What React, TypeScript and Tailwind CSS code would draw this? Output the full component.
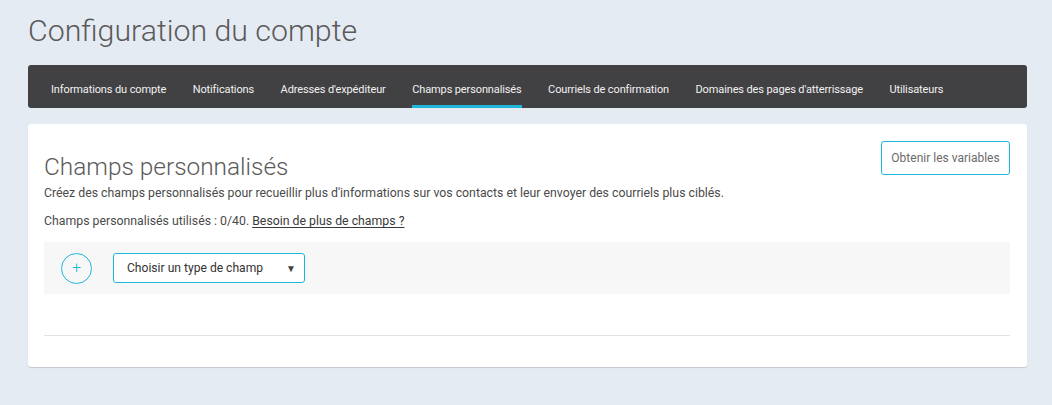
import React from "react";

const TABS = [
  "Informations du compte",
  "Notifications",
  "Adresses d'expéditeur",
  "Champs personnalisés",
  "Courriels de confirmation",
  "Domaines des pages d'atterrissage",
  "Utilisateurs",
];

const ACTIVE = "Champs personnalisés";

export default function App() {
  return (
    <div
      className="min-h-[405px] bg-[#e5ebf2] pl-[28px] pr-[25px] pt-[12px] pb-[39px]"
      style={{ fontFamily: "Roboto, 'Liberation Sans', sans-serif" }}
    >
      <h1 className="text-[30.3px] font-light leading-[38px] text-[#5a5a5a]">
        Configuration du compte
      </h1>

      {/* Tabs bar */}
      <nav className="mt-[15px] flex h-[43px] items-stretch rounded-[3px] bg-[#414042] pl-[23px]">
        {TABS.map((tab) => (
          <div
            key={tab}
            className={`mr-[26.5px] flex shrink-0 items-center whitespace-nowrap border-b-[3px] pt-[11px] text-[11px] tracking-[-0.12px] text-[#f2f2f2] ${
              tab === ACTIVE ? "border-[#1fb6dc]" : "border-transparent"
            }`}
          >
            {tab}
          </div>
        ))}
      </nav>

      {/* Card */}
      <div className="mt-[16px] rounded-[3px] bg-white pl-[16px] pr-[17px] pb-[31px] pt-[17px] shadow-[0_1px_1px_rgba(0,0,0,0.15)]">
        <div className="flex items-start justify-between">
          <div className="pt-[11px]">
            <h2 className="text-[24.4px] font-light leading-[30px] text-[#5a5a5a]">
              Champs personnalisés
            </h2>
            <p className="mt-[3px] text-[12.3px] leading-[16px] text-[#4a4a4a]">
              Créez des champs personnalisés pour recueillir plus d'informations sur vos contacts et leur envoyer des courriels plus ciblés.
            </p>
            <p className="mt-[12px] text-[12.3px] leading-[16px] text-[#4a4a4a]">
              Champs personnalisés utilisés : 0/40.{" "}
              <a href="#" className="text-[#3a3a3a] underline underline-offset-2">
                Besoin de plus de champs ?
              </a>
            </p>
          </div>
          <button className="h-[34px] w-[129px] rounded-[3px] border border-[#1fb6dc] text-[12px] text-[#6b6b6b]">
            Obtenir les variables
          </button>
        </div>

        <div className="mt-[13px] flex h-[52px] items-center bg-[#f7f7f7] pl-[17px]">
          <div className="flex h-[31px] w-[31px] items-center justify-center rounded-full border border-[#1fb6dc] text-[16px] font-light leading-none text-[#1fb6dc]">
            +
          </div>
          <div className="ml-[21px] flex h-[30px] w-[192px] items-center justify-between rounded-[3px] border border-[#1fb6dc] bg-white pl-[13px] pr-[8px] text-[12.1px] text-[#333]">
            <span>Choisir un type de champ</span>
            <span className="text-[10px] text-[#444]">▼</span>
          </div>
        </div>

        <div className="mt-[41px] h-px bg-[#e3e3e3]" />
      </div>
    </div>
  );
}
